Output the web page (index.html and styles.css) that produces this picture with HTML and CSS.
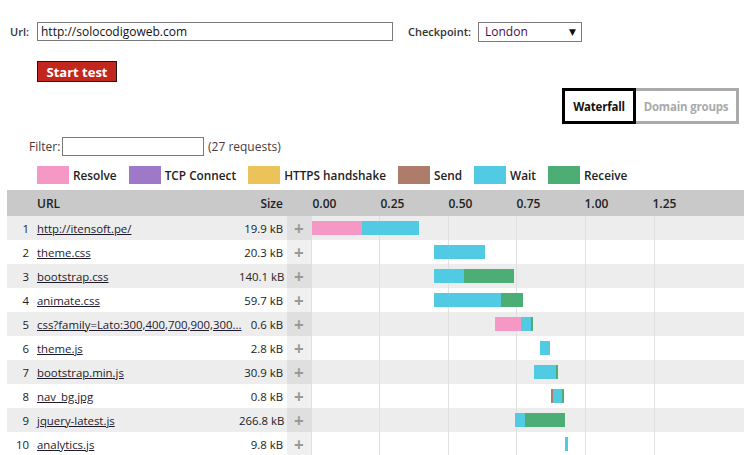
FILE: index.html
```html
<!DOCTYPE html>
<html>
<head>
<meta charset="utf-8">
<link rel="stylesheet" href="styles.css">
</head>
<body>
<div class="page">
  <div class="form-row">
    <label class="lbl url-lbl">Url:</label>
    <div class="text-input url-input">http://solocodigoweb.com</div>
    <label class="lbl cp-lbl">Checkpoint:</label>
    <div class="select">London<span class="arrow">▼</span></div>
  </div>
  <div class="btn-row">
    <button class="start-btn">Start test</button>
  </div>
  <div class="tabs">
    <div class="tab active">Waterfall</div>
    <div class="tab">Domain groups</div>
  </div>
  <div class="filter-row">
    <span class="filter-lbl">Filter:</span>
    <div class="text-input filter-input"></div>
    <span class="count">(27 requests)</span>
  </div>
  <div class="legend">
    <span class="sw resolve"></span><span class="lg">Resolve</span>
    <span class="sw connect"></span><span class="lg">TCP Connect</span>
    <span class="sw https"></span><span class="lg">HTTPS handshake</span>
    <span class="sw send"></span><span class="lg">Send</span>
    <span class="sw wait"></span><span class="lg">Wait</span>
    <span class="sw receive"></span><span class="lg">Receive</span>
  </div>
  <table class="wf">
    <colgroup>
      <col class="c-num"><col class="c-url"><col class="c-size"><col class="c-plus"><col class="c-chart">
    </colgroup>
    <thead>
      <tr>
        <th class="num"></th>
        <th class="url">URL</th>
        <th class="size">Size</th>
        <th class="plus-h"></th>
        <th class="chart-h"><div class="ticks"><span>0.00</span><span>0.25</span><span>0.50</span><span>0.75</span><span>1.00</span><span>1.25</span></div></th>
      </tr>
    </thead>
    <tbody>
      <tr><td class="num">1</td><td class="url"><a href="#">http://itensoft.pe/</a></td><td class="size">19.9 kB</td><td class="plus">+</td>
        <td class="chart"><div class="grid"></div><div class="bar resolve" style="left:0px;width:50px"></div><div class="bar wait" style="left:50px;width:57px"></div></td></tr>
      <tr><td class="num">2</td><td class="url"><a href="#">theme.css</a></td><td class="size">20.3 kB</td><td class="plus">+</td>
        <td class="chart"><div class="grid"></div><div class="bar wait" style="left:122px;width:51px"></div></td></tr>
      <tr><td class="num">3</td><td class="url"><a href="#">bootstrap.css</a></td><td class="size">140.1 kB</td><td class="plus">+</td>
        <td class="chart"><div class="grid"></div><div class="bar wait" style="left:122px;width:30px"></div><div class="bar receive" style="left:152px;width:50px"></div></td></tr>
      <tr><td class="num">4</td><td class="url"><a href="#">animate.css</a></td><td class="size">59.7 kB</td><td class="plus">+</td>
        <td class="chart"><div class="grid"></div><div class="bar wait" style="left:122px;width:67px"></div><div class="bar receive" style="left:189px;width:22px"></div></td></tr>
      <tr><td class="num">5</td><td class="url"><a href="#">css?family=Lato:300,400,700,900,300...</a></td><td class="size">0.6 kB</td><td class="plus">+</td>
        <td class="chart"><div class="grid"></div><div class="bar resolve" style="left:183px;width:26px"></div><div class="bar wait" style="left:209px;width:10px"></div><div class="bar receive" style="left:219px;width:2px"></div></td></tr>
      <tr><td class="num">6</td><td class="url"><a href="#">theme.js</a></td><td class="size">2.8 kB</td><td class="plus">+</td>
        <td class="chart"><div class="grid"></div><div class="bar wait" style="left:228px;width:10px"></div></td></tr>
      <tr><td class="num">7</td><td class="url"><a href="#">bootstrap.min.js</a></td><td class="size">30.9 kB</td><td class="plus">+</td>
        <td class="chart"><div class="grid"></div><div class="bar wait" style="left:222px;width:22px"></div><div class="bar receive" style="left:244px;width:2px"></div></td></tr>
      <tr><td class="num">8</td><td class="url"><a href="#">nav_bg.jpg</a></td><td class="size">0.8 kB</td><td class="plus">+</td>
        <td class="chart"><div class="grid"></div><div class="bar send" style="left:239px;width:2px"></div><div class="bar wait" style="left:241px;width:9px"></div><div class="bar receive" style="left:250px;width:2px"></div></td></tr>
      <tr><td class="num">9</td><td class="url"><a href="#">jquery-latest.js</a></td><td class="size">266.8 kB</td><td class="plus">+</td>
        <td class="chart"><div class="grid"></div><div class="bar wait" style="left:203px;width:10px"></div><div class="bar receive" style="left:213px;width:40px"></div></td></tr>
      <tr><td class="num">10</td><td class="url"><a href="#">analytics.js</a></td><td class="size">9.8 kB</td><td class="plus">+</td>
        <td class="chart"><div class="grid"></div><div class="bar wait" style="left:253px;width:3px"></div></td></tr>
    </tbody>
  </table>
</div>
</body>
</html>
```
FILE: styles.css
```css
html, body {
  margin: 0;
  padding: 0;
  background: #fff;
}
body {
  font-family: "Open Sans", "Noto Sans", "DejaVu Sans", sans-serif;
  font-size: 12px;
  color: #222;
}
.page {
  width: 747px;
  height: 455px;
  overflow: hidden;
}
.form-row {
  display: flex;
  align-items: center;
  padding-top: 22px;
  height: 19px;
}
.lbl {
  font-weight: 600;
  font-size: 11px;
  color: #333;
}
.url-lbl {
  margin-left: 10px;
  width: 27px;
}
.text-input {
  box-sizing: border-box;
  border: 1px solid #7a7a7a;
  height: 19px;
  font-size: 12px;
  line-height: 17px;
  padding-left: 3px;
  color: #111;
  background: #fff;
}
.url-input {
  width: 356px;
}
.cp-lbl {
  margin-left: 15px;
  width: 70px;
}
.select {
  box-sizing: border-box;
  width: 104px;
  height: 20px;
  border: 1px solid #7a7a7a;
  padding-left: 6px;
  font-size: 12px;
  line-height: 18px;
  color: #3a1050;
  position: relative;
}
.arrow {
  position: absolute;
  right: 5px;
  top: 0;
  font-size: 9px;
  color: #111;
}
.btn-row {
  padding: 20px 0 0 37px;
  height: 21px;
}
.start-btn {
  box-sizing: border-box;
  width: 80px;
  height: 21px;
  background: #c3261d;
  border: 1px solid #1a1a1a;
  color: #fff;
  font-family: inherit;
  font-weight: 700;
  font-size: 13px;
  padding: 0;
  line-height: 18px;
}
.tabs {
  display: flex;
  justify-content: flex-end;
  padding-right: 8px;
  margin-top: 6px;
}
.tab {
  box-sizing: border-box;
  height: 36px;
  border: 3px solid #aaa;
  border-left: none;
  font-weight: 700;
  font-size: 11.5px;
  color: #aaa;
  display: flex;
  align-items: center;
  justify-content: center;
  white-space: nowrap;
  padding: 0;
  width: 103px;
  letter-spacing: -0.2px;
}
.tab.active {
  border: 3px solid #000;
  color: #111;
  width: 74px;
}
.filter-row {
  display: flex;
  align-items: center;
  margin-top: 13px;
  height: 19px;
}
.filter-lbl {
  margin-left: 29px;
  width: 33px;
  color: #4a3a3a;
  font-size: 12px;
}
.filter-input {
  width: 142px;
}
.count {
  margin-left: 4px;
  color: #4a3a3a;
  font-size: 12px;
}
.legend {
  display: flex;
  align-items: center;
  margin-top: 10px;
  padding-left: 37px;
  height: 18px;
}
.sw {
  width: 32px;
  height: 18px;
  margin-right: 4px;
  flex: none;
}
.lg {
  font-weight: 600;
  font-size: 11.8px;
  color: #222;
  margin-right: 12px;
}
.resolve { background: #f598c5; }
.connect { background: #9e78c9; }
.https { background: #ecc25a; }
.send { background: #ae7c6a; }
.wait { background: #51cae4; }
.receive { background: #4dae75; }

.wf {
  margin: 6px 0 0 7px;
  border-collapse: collapse;
  table-layout: fixed;
  width: 737px;
}
.c-num { width: 26px; }
.c-url { width: 206px; }
.c-size { width: 48px; }
.c-plus { width: 24px; }
.c-chart { width: 433px; }
.wf th {
  background: #c9c9c9;
  height: 26px;
  padding: 0;
  font-weight: 600;
  font-size: 12px;
  color: #222;
  text-align: left;
}
.wf td {
  height: 24px;
  padding: 0;
  font-size: 11.4px;
  white-space: nowrap;
}
.wf tbody tr:nth-child(odd) { background: #ededed; }
.wf tbody tr:nth-child(even) { background: #fff; }
.wf .num {
  text-align: right;
  padding-right: 4px;
}
.wf .url {
  padding-left: 4px;
  overflow: visible;
}
.url a {
  color: #1e1a2e;
  text-decoration: underline;
}
.wf .size {
  text-align: right;
  padding-right: 4px;
}
.wf .plus {
  background: rgba(0, 0, 0, 0.06);
  color: #999;
  text-align: center;
  font-size: 17px;
  font-weight: 700;
  border-right: 1px solid #e0e0e0;
}
.plus-h {
  border-right: 1px solid #c9c9c9;
}
.ticks {
  display: flex;
  padding-left: 1px;
}
.ticks span {
  width: 68px;
  flex: none;
}
.chart {
  position: relative;
}
.grid {
  position: absolute;
  inset: 0;
  background-image: linear-gradient(#e0e0e0, #e0e0e0), linear-gradient(#e0e0e0, #e0e0e0), linear-gradient(#e0e0e0, #e0e0e0), linear-gradient(#e0e0e0, #e0e0e0), linear-gradient(#e0e0e0, #e0e0e0);
  background-size: 1px 100%;
  background-repeat: no-repeat;
  background-position: 67px 0, 136px 0, 204px 0, 273px 0, 342px 0;
}
.bar {
  position: absolute;
  top: 5px;
  height: 14px;
}
```
